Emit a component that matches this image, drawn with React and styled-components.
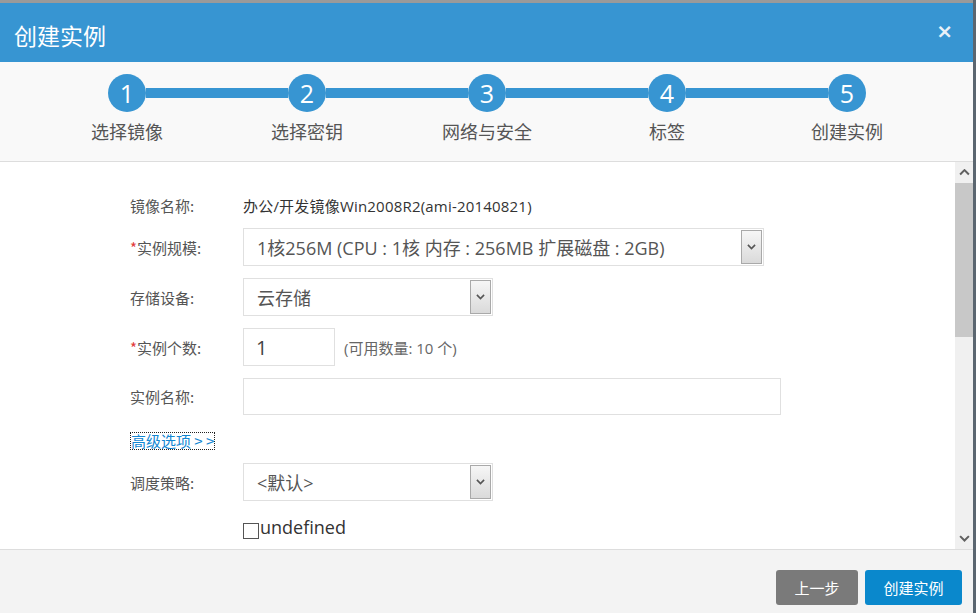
import React from "react";
import styled, { createGlobalStyle } from "styled-components";

const GlobalStyle = createGlobalStyle`
  html, body {
    margin: 0;
    padding: 0;
    background: #8e8e8e;
    font-family: "Open Sans", "Noto Sans CJK SC", sans-serif;
  }
  * { box-sizing: border-box; }
`;

const Page = styled.div`
  width: 976px;
  height: 613px;
  padding-top: 3px;
  overflow: hidden;
  background: linear-gradient(90deg, #9a9a9a 0, #9a9a9a 973px, #5b6670 973px);
`;

const Dialog = styled.div`
  width: 973px;
  height: 610px;
  display: flex;
  flex-direction: column;
  background: #fff;
`;

const Header = styled.div`
  height: 59px;
  background: #3795d2;
  display: flex;
  align-items: center;
  justify-content: space-between;
  padding: 0 20px 0 14px;
`;

const Title = styled.h3`
  margin: 0;
  color: #fff;
  font-size: 23px;
  font-weight: 400;
  font-family: "Noto Sans CJK SC", sans-serif;
  line-height: 1;
  margin-top: 6px;
`;

const Close = styled.span`
  color: #e9f1f8;
  font-size: 20px;
  font-weight: 700;
  font-family: "DejaVu Sans", sans-serif;
  line-height: 1;
  margin-top: -4px;
`;

const StepsBand = styled.div`
  height: 100px;
  background: #f9f9f9;
  border-bottom: 1px solid #dddddd;
  padding-top: 12px;
`;

const Track = styled.div`
  display: flex;
  align-items: center;
  padding-left: 108px;
`;

const Circle = styled.div`
  width: 38px;
  height: 38px;
  border-radius: 50%;
  background: #3795d2;
  color: #fff;
  display: flex;
  align-items: center;
  justify-content: center;
  font-size: 25px;
  font-family: "Open Sans", sans-serif;
  line-height: 1;
`;

const Connector = styled.div`
  width: 142px;
  height: 10px;
  background: #3795d2;
`;

const Labels = styled.div`
  display: flex;
  padding-left: 37px;
  margin-top: 7px;
`;

const StepLabel = styled.div`
  width: 180px;
  text-align: center;
  font-size: 18px;
  line-height: 24px;
  color: #555;
  font-family: "Noto Sans CJK SC", sans-serif;
`;

const Body = styled.div`
  flex: 1;
  display: flex;
  min-height: 0;
`;

const Form = styled.div`
  flex: 1;
  padding-left: 130px;
  display: flex;
  flex-direction: column;
`;

const Row = styled.div`
  display: flex;
  align-items: center;
  height: ${(p) => p.$h}px;
  margin-top: ${(p) => p.$mt}px;
`;

const Label = styled.div`
  width: 113px;
  font-size: 15px;
  color: #555;
  font-family: "Noto Sans CJK SC", sans-serif;
`;

const Req = styled.span`
  color: #e23b3b;
`;

const Value = styled.div`
  font-size: 15px;
  color: #333;
  font-family: "Open Sans", "Noto Sans CJK SC", sans-serif;
  letter-spacing: 0.2px;
`;

const SelectBox = styled.div`
  width: ${(p) => p.$w}px;
  height: 100%;
  border: 1px solid #e0e0e0;
  display: flex;
  align-items: center;
  justify-content: space-between;
  padding: 1px 1px 1px 13px;
  font-size: 18px;
  color: #555;
  font-family: "Open Sans", "Noto Sans CJK SC", sans-serif;
  background: #fff;
`;

const DropBtn = styled.div`
  width: 21px;
  height: 100%;
  border: 1px solid #a9a9a9;
  background: linear-gradient(#f6f6f6, #dadada);
  display: flex;
  align-items: center;
  justify-content: center;
`;

const Input = styled.div`
  width: ${(p) => p.$w}px;
  height: 100%;
  border: 1px solid #e0e0e0;
  display: flex;
  align-items: center;
  padding-left: 12px;
  font-size: 20px;
  color: #444;
  font-family: "Open Sans", sans-serif;
`;

const Hint = styled.span`
  margin-left: 9px;
  font-size: 15px;
  color: #666;
  font-family: "Open Sans", "Noto Sans CJK SC", sans-serif;
`;

const AdvLink = styled.a`
  display: inline-block;
  font-size: 15px;
  color: #1387d3;
  border: 1px dotted #222;
  line-height: 15px;
  padding-bottom: 1px;
  text-decoration: none;
  font-family: "Noto Sans CJK SC", sans-serif;
`;

const Check = styled.span`
  width: 16px;
  height: 16px;
  border: 1px solid #555;
  margin-left: 113px;
  margin-top: 8px;
  background: #fff;
`;

const CheckText = styled.span`
  font-size: 18px;
  color: #333;
  margin-left: 1px;
  font-family: "Open Sans", sans-serif;
`;

const ScrollBar = styled.div`
  width: 18px;
  background: #f0f0f0;
  display: flex;
  flex-direction: column;
  align-items: stretch;
`;

const ScrollArrow = styled.div`
  height: 21px;
  display: flex;
  align-items: center;
  justify-content: center;
`;

const Thumb = styled.div`
  height: 154px;
  background: #c8c8c8;
`;

const Spacer = styled.div`
  flex: 1;
`;

const Footer = styled.div`
  height: 64px;
  background: #f3f3f3;
  border-top: 1px solid #dddddd;
  display: flex;
  justify-content: flex-end;
  align-items: flex-start;
  gap: 7px;
  padding: 20px 11px 0 0;
`;

const Button = styled.button`
  height: 35px;
  width: ${(p) => p.$w}px;
  border: none;
  border-radius: 3px;
  background: ${(p) => (p.$primary ? "#0a88cc" : "#7a7a7a")};
  color: #fff;
  font-size: 15px;
  font-family: "Noto Sans CJK SC", sans-serif;
  cursor: pointer;
`;

const Chevron = ({ up, size = 9, color = "#555" }) => (
  <svg width={size} height={size * 0.6} viewBox="0 0 10 6">
    <polyline
      points={up ? "1,5 5,1 9,5" : "1,1 5,5 9,1"}
      fill="none"
      stroke={color}
      strokeWidth="1.8"
    />
  </svg>
);

const Select = ({ w, children }) => (
  <SelectBox $w={w}>
    <span>{children}</span>
    <DropBtn>
      <Chevron size={9} color="#555" />
    </DropBtn>
  </SelectBox>
);

const steps = ["选择镜像", "选择密钥", "网络与安全", "标签", "创建实例"];

export default function App() {
  return (
    <>
      <GlobalStyle />
      <Page>
        <Dialog>
          <Header>
            <Title>创建实例</Title>
            <Close>×</Close>
          </Header>
          <StepsBand>
            <Track>
              {steps.map((s, i) => (
                <React.Fragment key={s}>
                  <Circle>{i + 1}</Circle>
                  {i < steps.length - 1 && <Connector />}
                </React.Fragment>
              ))}
            </Track>
            <Labels>
              {steps.map((s) => (
                <StepLabel key={s}>{s}</StepLabel>
              ))}
            </Labels>
          </StepsBand>
          <Body>
            <Form>
              <Row $h={24} $mt={31}>
                <Label>镜像名称:</Label>
                <Value>办公/开发镜像Win2008R2(ami-20140821)</Value>
              </Row>
              <Row $h={38} $mt={11}>
                <Label>
                  <Req>*</Req>实例规模:
                </Label>
                <Select w={521}>1核256M (CPU : 1核 内存 : 256MB 扩展磁盘 : 2GB)</Select>
              </Row>
              <Row $h={38} $mt={12}>
                <Label>存储设备:</Label>
                <Select w={250}>云存储</Select>
              </Row>
              <Row $h={38} $mt={12}>
                <Label>
                  <Req>*</Req>实例个数:
                </Label>
                <Input $w={92}>1</Input>
                <Hint>(可用数量: 10 个)</Hint>
              </Row>
              <Row $h={37} $mt={12}>
                <Label>实例名称:</Label>
                <Input $w={538} />
              </Row>
              <Row $h={17} $mt={17}>
                <AdvLink>高级选项 &gt; &gt;</AdvLink>
              </Row>
              <Row $h={38} $mt={14}>
                <Label>调度策略:</Label>
                <Select w={250}>&lt;默认&gt;</Select>
              </Row>
              <Row $h={20} $mt={16}>
                <Check />
                <CheckText>undefined</CheckText>
              </Row>
            </Form>
            <ScrollBar>
              <ScrollArrow>
                <Chevron up size={11} color="#606060" />
              </ScrollArrow>
              <Thumb />
              <Spacer />
              <ScrollArrow>
                <Chevron size={11} color="#606060" />
              </ScrollArrow>
            </ScrollBar>
          </Body>
          <Footer>
            <Button $w={82}>上一步</Button>
            <Button $w={97} $primary>
              创建实例
            </Button>
          </Footer>
        </Dialog>
      </Page>
    </>
  );
}
